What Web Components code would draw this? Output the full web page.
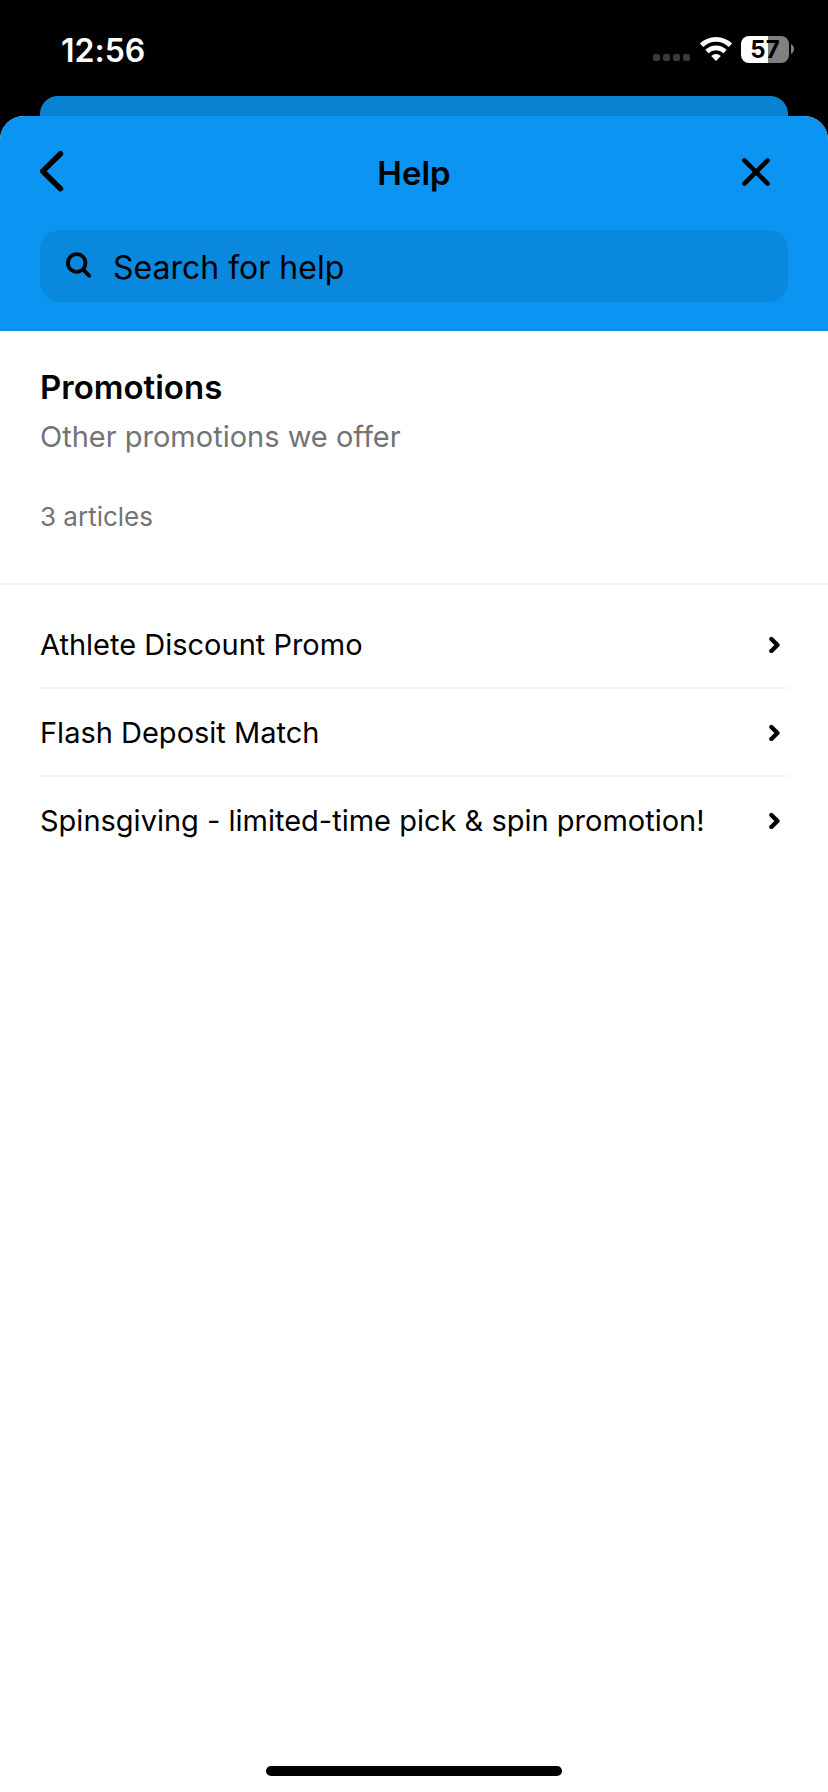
<!DOCTYPE html>
<html lang="en">
<head>
<meta charset="utf-8">
<meta name="viewport" content="width=device-width, initial-scale=1">
<title>Help</title>
<style>
  body { margin: 0; background: #000; color: #000; font-family: Inter, "Liberation Sans", sans-serif; font-variant-ligatures: none; }
</style>
</head>
<body>
<help-app>
  <status-bar slot="status" time="12:56" battery="57"></status-bar>
  <help-header slot="header" heading="Help"><help-search slot="search" label="Search for help"></help-search></help-header>
  <collection-intro heading="Promotions" count="3 articles">Other promotions we offer</collection-intro>
  <article-list>
    <article-link>Athlete Discount Promo</article-link>
    <article-link>Flash Deposit Match</article-link>
    <article-link>Spinsgiving - limited-time pick &amp; spin promotion!</article-link>
  </article-list>
</help-app>

<script>
  const define = (name, render) => customElements.define(name, class extends HTMLElement {
    constructor() {
      super();
      this.attachShadow({ mode: 'open' });
    }
    connectedCallback() {
      this.shadowRoot.innerHTML = '<style>*{box-sizing:border-box}svg{display:block}</style>' + render(this);
    }
  });

  define('help-app', () => `
    <style>
      :host { display: flex; flex-direction: column; min-height: 100vh; }
      .peek { height: 20px; margin: 0 40px; background: #0982d2; border-radius: 18px 18px 0 0; }
      .sheet { flex: 1; display: flex; flex-direction: column; background: #fff; border-radius: 24px 24px 0 0; overflow: hidden; }
      main { flex: 1; }
      footer { display: flex; justify-content: center; padding: 16px; }
      .home { width: 296px; height: 10px; border-radius: 5px; background: #000; }
    </style>
    <slot name="status"></slot>
    <div class="peek"></div>
    <div class="sheet">
      <slot name="header"></slot>
      <main><slot></slot></main>
      <footer><div class="home"></div></footer>
    </div>`);

  define('status-bar', el => `
    <style>
      :host { display: flex; justify-content: space-between; align-items: center; height: 96px; padding: 2px 34px 0 61px; box-sizing: border-box; color: #fff; }
      time { padding-top: 4px; font-size: 32px; line-height: 40px; font-weight: 600; }
      .icons { display: flex; align-items: center; gap: 8px; }
      .battery { display: flex; align-items: center; gap: 2px; }
      .level { width: 48px; height: 27px; border-radius: 8px; color: #000; font-size: 24px; line-height: 28px; font-weight: 700; text-align: center;
        background: linear-gradient(90deg, #fff ${el.getAttribute('battery')}%, #808080 ${el.getAttribute('battery')}%); }
    </style>
    <time>${el.getAttribute('time')}</time>
    <div class="icons">
      <svg width="38" height="26" viewBox="0 0 38 26" fill="#3a3a3a" aria-hidden="true">
        <rect x="0" y="18" width="7" height="7" rx="2"/><rect x="10" y="18" width="7" height="7" rx="2"/>
        <rect x="20" y="18" width="7" height="7" rx="2"/><rect x="30" y="18" width="7" height="7" rx="2"/>
      </svg>
      <svg width="34" height="26" viewBox="0 0 34 26" fill="none" stroke="#fff" stroke-width="4.8" aria-hidden="true">
        <path d="M2.6 9.2a20.6 20.6 0 0 1 28.8 0"/><path d="M8 15.4a13 13 0 0 1 18 0"/>
        <path d="M17 25l-4.8-5a6.8 6.8 0 0 1 9.6 0z" fill="#fff" stroke="none"/>
      </svg>
      <div class="battery">
        <div class="level">${el.getAttribute('battery')}</div>
        <svg width="3" height="10" viewBox="0 0 3 10" fill="#808080" aria-hidden="true"><path d="M0 0c4 2 4 8 0 10z"/></svg>
      </div>
    </div>`);

  define('help-header', el => `
    <style>
      :host { display: block; background: #0b94f2; padding: 24px 40px 29px; }
      .bar { display: grid; grid-template-columns: 64px 1fr 64px; align-items: center; height: 64px; margin-bottom: 26px; }
      h1 { margin: 0; padding-top: 2px; font-size: 33px; line-height: 40px; font-weight: 600; text-align: center; }
      button { display: flex; align-items: center; width: 64px; height: 64px; padding: 0; border: 0; background: none; color: inherit; }
      .close { justify-content: center; }
    </style>
    <div class="bar">
      <button type="button" aria-label="Back">
        <svg width="24" height="42" viewBox="0 0 24 42" fill="none" stroke="currentColor" stroke-width="5.4" stroke-linecap="round" stroke-linejoin="round"><path d="M20.5 2.7L2.7 20.2l17.8 17.5"/></svg>
      </button>
      <h1>${el.getAttribute('heading')}</h1>
      <button class="close" type="button" aria-label="Close">
        <svg width="28" height="28" viewBox="0 0 28 28" fill="none" stroke="currentColor" stroke-width="4.6" stroke-linecap="round"><path d="M2.4 2.4l23.2 23.2M25.6 2.4L2.4 25.6"/></svg>
      </button>
    </div>
    <slot name="search"></slot>`);

  define('help-search', el => `
    <style>
      :host { display: block; }
      label { display: flex; align-items: center; gap: 21px; height: 72px; padding: 0 26px; border-radius: 20px; background: #0a88dd; }
      input { flex: 1; min-width: 0; height: 42px; padding: 2px 0 0; border: 0; outline: 0; background: none; color: inherit; font: 400 32px/40px Inter, "Liberation Sans", sans-serif; }
      input::placeholder { color: #000; opacity: 1; }
    </style>
    <label>
      <svg width="26" height="28" viewBox="0 0 26 28" fill="none" stroke="#000" stroke-width="3.8" stroke-linecap="round" aria-hidden="true"><circle cx="10.7" cy="11" r="8.8"/><path d="M17.2 17.6l6 6.2"/></svg>
      <input type="search" placeholder="${el.getAttribute('label')}" aria-label="${el.getAttribute('label')}">
    </label>`);

  define('collection-intro', el => `
    <style>
      :host { display: block; padding: 36px 40px 50px; border-bottom: 2px solid #f4f4f4; color: #737376; }
      h2 { margin: 0 0 10px; font-size: 33px; line-height: 40px; font-weight: 600; color: #000; }
      p { margin: 0; font-size: 29px; line-height: 40px; }
      .count { margin-top: 44px; font-size: 26px; line-height: 32px; }
    </style>
    <h2>${el.getAttribute('heading')}</h2>
    <p><slot></slot></p>
    <p class="count">${el.getAttribute('count')}</p>`);

  define('article-list', () => `
    <style>
      :host { display: block; padding: 16px 40px; }
      ::slotted(article-link:not(:last-child)) { border-bottom: 2px solid #f4f4f4; }
    </style>
    <nav aria-label="Articles"><slot></slot></nav>`);

  define('article-link', () => `
    <style>
      :host { display: block; }
      a { display: flex; align-items: center; justify-content: space-between; gap: 24px; min-height: 86px; padding-right: 8px; color: inherit; text-decoration: none; font-size: 29px; line-height: 40px; }
      span { padding-top: 2px; }
      svg { flex: none; }
    </style>
    <a href="#"><span><slot></slot></span>
      <svg width="12" height="18" viewBox="0 0 12 18" fill="none" stroke="currentColor" stroke-width="4.4" stroke-linecap="round" stroke-linejoin="round" aria-hidden="true"><path d="M3.4 4l6 6-6 6"/></svg>
    </a>`);
</script>
</body>
</html>
